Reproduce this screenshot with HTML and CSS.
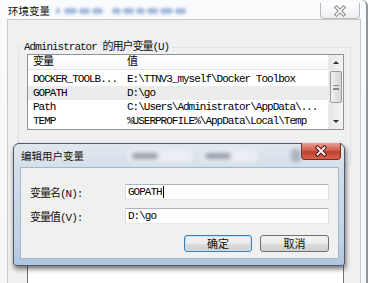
FILE: index.html
```html
<!DOCTYPE html>
<html lang="zh-CN">
<head>
  <meta charset="UTF-8" />
  <title>环境变量</title>
  <link rel="stylesheet" href="styles.css">
</head>
<body>
  <div class="screen">
    <div class="win">
      <div class="win-title">
        <span class="caption">环境变量</span>
        <span class="haze"><i class="w4"></i><i class="w14"></i><i class="w12"></i><i class="w12 gap"></i><i class="w10"></i><i class="w12"></i><i class="w10"></i><i class="w12"></i><i class="w14"></i><i class="w12"></i></span>
        <span class="close">
          <svg width="14" height="12" viewBox="0 0 14 12"><path d="M3.5 2.5 L10.5 9.5 M10.5 2.5 L3.5 9.5" stroke="#8a8a8a" stroke-width="3.6" stroke-linecap="square" fill="none"/><path d="M3.5 2.5 L10.5 9.5 M10.5 2.5 L3.5 9.5" stroke="#fff" stroke-width="1.6" stroke-linecap="square" fill="none"/></svg>
        </span>
      </div>
      <div class="panel">
        <fieldset class="group">
          <legend class="mono">Administrator 的用户变量(U)</legend>
          <div class="listview">
            <div class="lv-main mono">
              <div class="lv-head"><span class="c1">变量</span><span class="c2">值</span></div>
              <div class="lv-body">
                <div class="lv-row"><span class="c1">DOCKER_TOOLB...</span><span class="c2">E:\TTNV3_myself\Docker Toolbox</span></div>
                <div class="lv-row sel"><span class="c1">GOPATH</span><span class="c2">D:\go</span></div>
                <div class="lv-row"><span class="c1">Path</span><span class="c2">C:\Users\Administrator\AppData\...</span></div>
                <div class="lv-row"><span class="c1">TEMP</span><span class="c2">%USERPROFILE%\AppData\Local\Temp</span></div>
              </div>
            </div>
            <div class="vscroll">
              <div class="sb-btn"><span class="arrow up"></span></div>
              <div class="thumb"><span class="grip"></span></div>
              <div class="sb-track"></div>
              <div class="sb-btn"><span class="arrow down"></span></div>
            </div>
          </div>
        </fieldset>
        <div class="listview lower"></div>
      </div>
    </div>

    <div class="dialog">
      <div class="dlg-title">
        <span class="caption">编辑用户变量</span>
        <span class="ghost g1"><b></b></span>
        <span class="ghost g2"><b></b></span>
        <span class="ghost g3"></span>
        <span class="close red">
          <svg width="16" height="12" viewBox="0 0 16 12"><path d="M4.5 2.5 L11.5 9.5 M11.5 2.5 L4.5 9.5" stroke="#4a1410" stroke-width="3.8" stroke-linecap="square" fill="none"/><path d="M4.5 2.5 L11.5 9.5 M11.5 2.5 L4.5 9.5" stroke="#fff" stroke-width="1.8" stroke-linecap="square" fill="none"/></svg>
        </span>
      </div>
      <div class="dlg-body mono">
        <div class="field">
          <span class="label">变量名(N):</span>
          <div class="textbox">GOPATH<span class="caret"></span></div>
        </div>
        <div class="field">
          <span class="label">变量值(V):</span>
          <div class="textbox">D:\go</div>
        </div>
        <div class="buttons">
          <span class="btn default">确定</span>
          <span class="btn wide">取消</span>
        </div>
      </div>
    </div>
  </div>
</body>
</html>
```

FILE: styles.css
```css
/* Base */
body {
  margin: 0;
  background: #fff;
  font-family: "Noto Sans CJK SC", sans-serif;
  color: #000;
}
.screen {
  position: relative;
  width: 374px;
  height: 283px;
  overflow: hidden;
  background: #fff;
}
.mono {
  font-family: "Liberation Mono", "Noto Sans CJK SC", monospace;
  font-size: 11px;
  letter-spacing: -1px;
}

/* Outer window */
.win {
  width: 368px;
  height: 283px;
  box-sizing: border-box;
  padding-top: 3px;
  background: linear-gradient(#fafbfc, #f5f6f8);
  border-right: 2px solid #8f959b;
  border-top-right-radius: 6px;
  display: flex;
  flex-direction: column;
}
.win-title {
  height: 22px;
  display: flex;
  align-items: center;
  padding-left: 8px;
}
.caption {
  flex: none;
  white-space: nowrap;
  font-size: 10.5px;
  line-height: 12px;
  color: #111;
}
.haze {
  display: flex;
  align-items: center;
  margin-left: 6px;
}
.haze i {
  display: inline-block;
  height: 6px;
  margin-right: 2px;
  border-radius: 3px;
  background: rgba(95, 135, 195, 0.55);
  filter: blur(1.4px);
}
.haze .w4 { width: 4px; margin-right: 4px; }
.haze .w10 { width: 9px; }
.haze .w12 { width: 11px; }
.haze .w14 { width: 13px; }
.haze .gap { margin-right: 9px; }
.close {
  flex: none;
  margin-left: auto;
  margin-right: 6px;
  align-self: flex-start;
  width: 40px;
  height: 16px;
  box-sizing: border-box;
  border: 1px solid #b4b8bd;
  border-top: none;
  border-radius: 0 0 4px 4px;
  background: linear-gradient(#fdfdfd, #eef0f2);
  display: flex;
  align-items: center;
  justify-content: center;
}

.panel {
  flex: 1;
  margin: 0 5px 0 7px;
  background: #f0f0f0;
  border: 1px solid #cbcbcb;
  border-bottom: none;
}

/* Group box with the user list */
.group {
  margin: 21px 9px 0 10px;
  padding: 1px 9px 34px 8px;
  border: 1px solid #dde3e8;
  border-radius: 2px;
  min-width: 0;
}
.group legend {
  padding: 0 2px;
  margin-left: -5px;
  line-height: 12px;
  color: #111;
}

.listview {
  display: flex;
  width: 317px;
  height: 76px;
  box-sizing: border-box;
  border: 1px solid #8e939b;
  background: #fff;
}
.lv-main {
  width: 301px;
}
.lv-head {
  height: 14px;
  line-height: 14px;
  display: flex;
  border-bottom: 1px solid #e5e5e5;
  background: linear-gradient(#fff, #f7f8fa);
}
.lv-body {
  padding-top: 2px;
}
.lv-row {
  height: 14px;
  line-height: 14px;
  display: flex;
  white-space: nowrap;
}
.lv-row.sel {
  background: #ececec;
}
.c1 {
  width: 94px;
  padding-left: 5px;
  flex: none;
}
.c2 {
  flex: none;
}

/* Scrollbar */
.vscroll {
  width: 14px;
  display: flex;
  flex-direction: column;
  align-items: center;
  background: linear-gradient(90deg, #e8e8e8, #f4f4f4);
  border-left: 1px solid #ececec;
}
.sb-btn {
  height: 14px;
  width: 100%;
  display: flex;
  align-items: center;
  justify-content: center;
}
.sb-btn:last-child {
  height: 12px;
  margin-bottom: 2px;
}
.arrow {
  width: 0;
  height: 0;
  border-left: 3px solid transparent;
  border-right: 3px solid transparent;
}
.arrow.up { border-bottom: 3px solid #333; }
.arrow.down { border-top: 3px solid #333; }
.thumb {
  margin-top: 2px;
  width: 12px;
  height: 32px;
  box-sizing: border-box;
  border: 1px solid #9a9a9a;
  border-radius: 2px;
  background: linear-gradient(90deg, #f3f3f3, #e2e2e2 50%, #d6d6d6);
  display: flex;
  align-items: center;
  justify-content: center;
}
.grip {
  width: 6px;
  height: 5px;
  border-top: 1px solid #8a8a8a;
  border-bottom: 1px solid #8a8a8a;
  box-sizing: border-box;
  background: linear-gradient(#fff0 2px, #8a8a8a 2px, #8a8a8a 3px, #fff0 3px);
}
.sb-track {
  flex: 1;
}

.listview.lower {
  margin: 95px 0 0 19px;
  height: 40px;
  border-color: #6f737a;
}

/* Edit dialog, floating over the window */
.dialog {
  position: absolute;
  left: 13px;
  top: 143px;
  width: 332px;
  height: 123px;
  box-sizing: border-box;
  padding: 0 5px 6px 6px;
  border: 1px solid #4f5a68;
  border-radius: 6px 6px 3px 3px;
  background: linear-gradient(#e1e7ee, #d2dde9 25%, #bfd2e6 80%, #aec6e1);
  box-shadow: 1px 3px 5px rgba(0, 0, 0, 0.55);
  display: flex;
  flex-direction: column;
}
.dlg-title {
  height: 23px;
  display: flex;
  align-items: center;
}
.dlg-title .caption {
  margin-left: 1px;
  font-size: 10.5px;
}
.ghost {
  flex: none;
  height: 13px;
  border-radius: 4px;
  background: rgba(236, 240, 245, 0.9);
  filter: blur(2px);
  display: flex;
  align-items: center;
  padding-left: 4px;
  box-sizing: border-box;
}
.ghost b {
  width: 26px;
  height: 6px;
  border-radius: 3px;
  background: rgba(80, 90, 105, 0.55);
}
.g1 { width: 65px; margin-left: 44px; }
.g2 { width: 57px; margin-left: 8px; }
.g3 { width: 10px; margin-left: 33px; background: rgba(120, 130, 145, 0.5); }
.close.red {
  margin-top: -1px;
  margin-right: -1px;
  height: 17px;
  border: 1px solid #7a2b25;
  border-top: none;
  background: linear-gradient(#e8a093, #d0604f 45%, #c0402f 55%, #d7624d);
}

.dlg-body {
  flex: 1;
  background: #f0f0f0;
  border: 1px solid #a3b8cf;
  padding: 16px 9px 6px 9px;
  display: flex;
  flex-direction: column;
  gap: 8px;
}
.field {
  height: 16px;
  display: flex;
  align-items: center;
}
.label {
  width: 95px;
  flex: none;
  color: #111;
}
.textbox {
  width: 205px;
  height: 16px;
  box-sizing: border-box;
  padding-left: 2px;
  line-height: 14px;
  background: #fff;
  border: 1px solid;
  border-color: #aeb4bd #dbdfe6 #e3e9ef #d6dbe3;
  display: flex;
  align-items: center;
}
.caret {
  width: 1px;
  height: 12px;
  margin-left: 1px;
  background: #000;
}
.buttons {
  margin-top: 3px;
  display: flex;
  justify-content: flex-end;
  gap: 8px;
}
.btn {
  width: 68px;
  height: 17px;
  box-sizing: border-box;
  border: 1px solid #707070;
  border-radius: 3px;
  background: linear-gradient(#f2f2f2, #ebebeb 50%, #dddddd 50%, #cfcfcf);
  font-family: "Noto Sans CJK SC", sans-serif;
  font-size: 11px;
  letter-spacing: 0;
  line-height: 15px;
  text-align: center;
  color: #111;
}
.btn.wide { width: 69px; }
.btn.default {
  border-color: #3c7fb1;
  box-shadow: inset 0 0 0 1px #bfe3f7;
}
```
